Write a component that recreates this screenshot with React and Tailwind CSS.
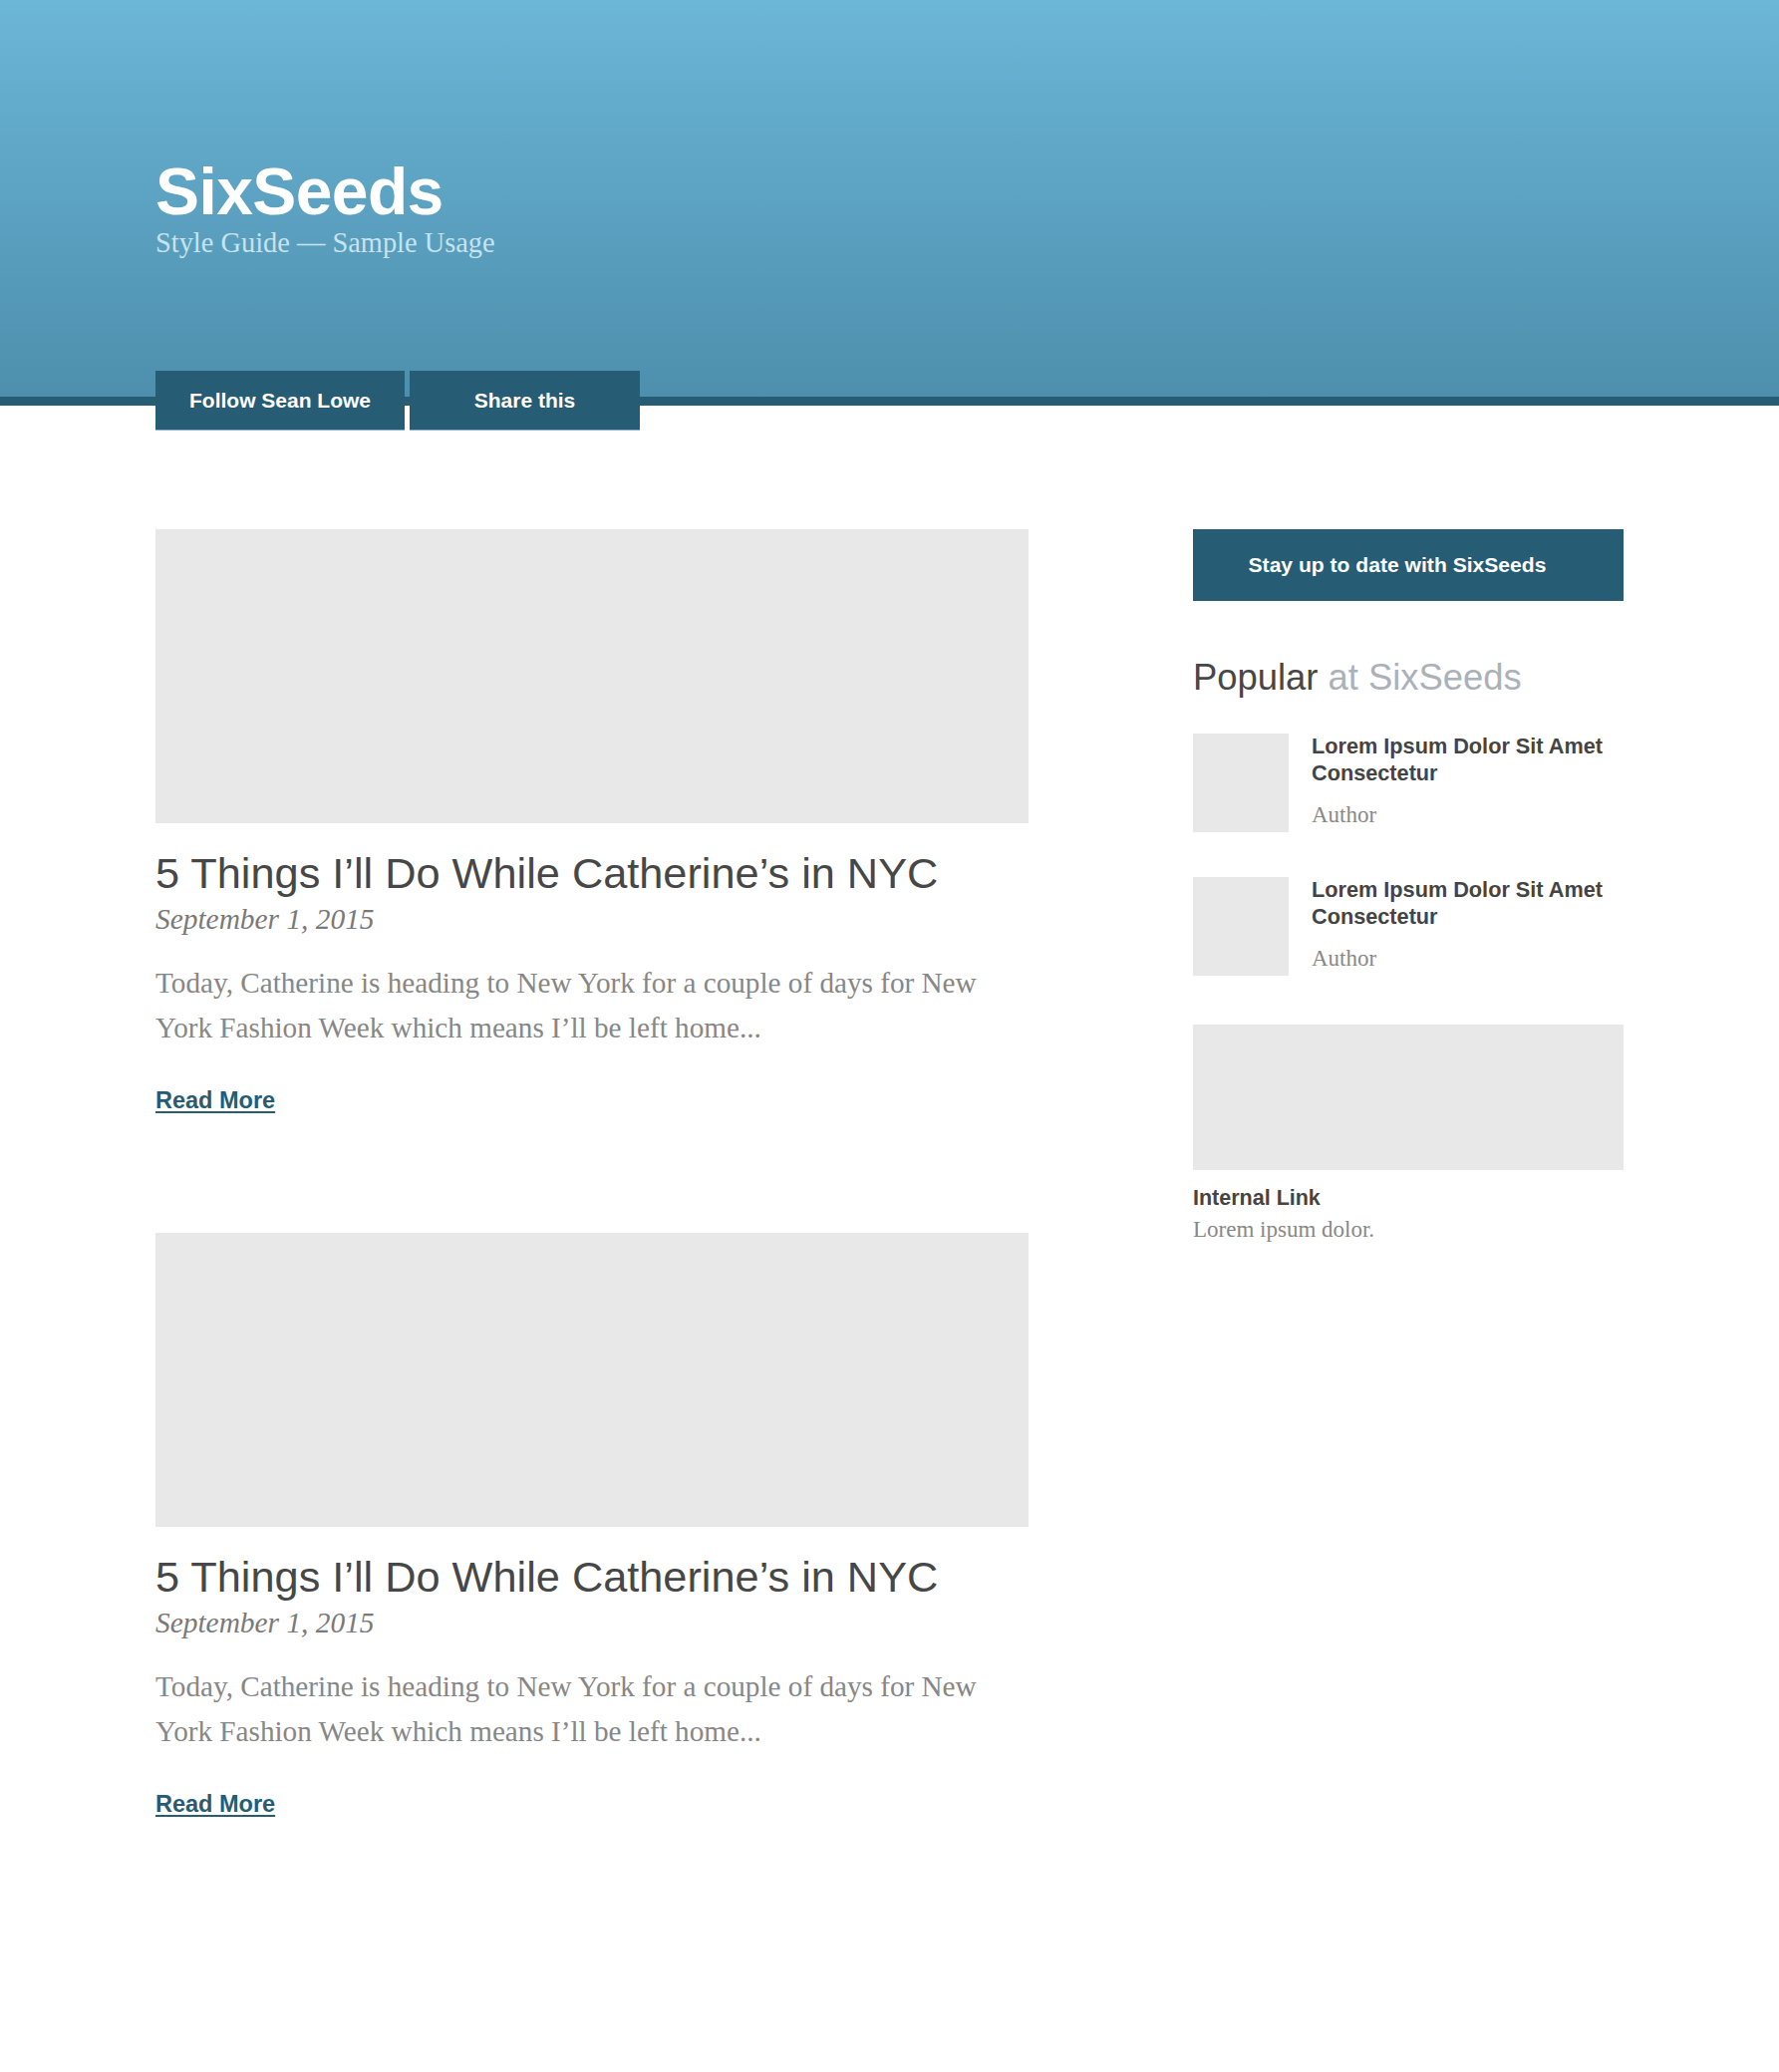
import React from "react";

const sans = { fontFamily: '"Liberation Sans", Arial, sans-serif' };
const serif = { fontFamily: '"Liberation Serif", "Times New Roman", serif' };

function Article() {
  return (
    <article>
      <div className="h-[295px] w-full bg-[#e8e8e8]" />
      <h2
        className="mt-[25px] text-[43.3px] leading-[50px] text-[#474747]"
        style={sans}
      >
        5 Things I’ll Do While Catherine’s in NYC
      </h2>
      <p
        className="mt-[3px] text-[29.4px] leading-[36px] italic text-[#7a7a7a]"
        style={serif}
      >
        September 1, 2015
      </p>
      <p
        className="mt-[24px] text-[29.2px] leading-[45px] text-[#878787]"
        style={serif}
      >
        Today, Catherine is heading to New York for a couple of days for New
        York Fashion Week which means I’ll be left home...
      </p>
      <a
        href="#"
        className="mt-[35px] inline-block text-[23.5px] leading-[30px] font-bold text-[#265c74] underline decoration-2 underline-offset-[3px]"
        style={sans}
      >
        Read More
      </a>
    </article>
  );
}

function PopularItem() {
  return (
    <div className="flex items-start gap-[23px]">
      <div className="h-[99px] w-[96px] shrink-0 bg-[#e8e8e8]" />
      <div className="-mt-[1px]">
        <h4
          className="text-[21.7px] leading-[27px] font-bold text-[#444444]"
          style={sans}
        >
          Lorem Ipsum Dolor Sit Amet Consectetur
        </h4>
        <p className="mt-[15px] text-[23px] leading-[28px] text-[#888888]" style={serif}>
          Author
        </p>
      </div>
    </div>
  );
}

export default function App() {
  return (
    <div className="min-h-[2079px] bg-white">
      <header className="border-b-[9px] border-[#265c74] bg-gradient-to-b from-[#6cb6d7] to-[#4d8fad]">
        <div className="px-[156px] pt-[159px]">
          <h1
            className="text-[66px] leading-[66px] font-bold text-white tracking-[-0.6px]"
            style={sans}
          >
            SixSeeds
          </h1>
          <p className="mt-[2px] text-[28.4px] leading-[34px] text-[#c6e3ef]" style={serif}>
            Style Guide — Sample Usage
          </p>
          <nav className="mt-[111px] -mb-[34px] flex gap-[5px]">
            <a
              href="#"
              className="flex h-[60px] w-[250px] items-center justify-center border-b border-[#86adc0] bg-[#265c74] text-[21px] font-bold text-white"
              style={sans}
            >
              Follow Sean Lowe
            </a>
            <a
              href="#"
              className="flex h-[60px] w-[231px] items-center justify-center border-b border-[#86adc0] bg-[#265c74] text-[21px] font-bold text-white"
              style={sans}
            >
              Share this
            </a>
          </nav>
        </div>
      </header>

      <main className="flex gap-[165px] px-[156px] pt-[124px]">
        <div className="flex w-[876px] flex-col gap-[118px]">
          <Article />
          <Article />
        </div>

        <aside className="w-[432px]">
          <a
            href="#"
            className="flex h-[72px] items-center justify-center pr-[22px] bg-[#265c74] text-[21.1px] font-bold text-white"
            style={sans}
          >
            Stay up to date with SixSeeds
          </a>
          <h3 className="mt-[55px] text-[36.4px] leading-[44px] text-[#474747]" style={sans}>
            Popular <span className="text-[#abb1b9]">at SixSeeds</span>
          </h3>
          <div className="mt-[34px] flex flex-col gap-[45px]">
            <PopularItem />
            <PopularItem />
          </div>
          <div className="mt-[49px] h-[146px] w-full bg-[#e8e8e8]" />
          <h4
            className="mt-[15px] text-[21.5px] leading-[27px] font-bold text-[#444444]"
            style={sans}
          >
            Internal Link
          </h4>
          <p className="mt-[4px] text-[23px] leading-[28px] text-[#888888]" style={serif}>
            Lorem ipsum dolor.
          </p>
        </aside>
      </main>
    </div>
  );
}
